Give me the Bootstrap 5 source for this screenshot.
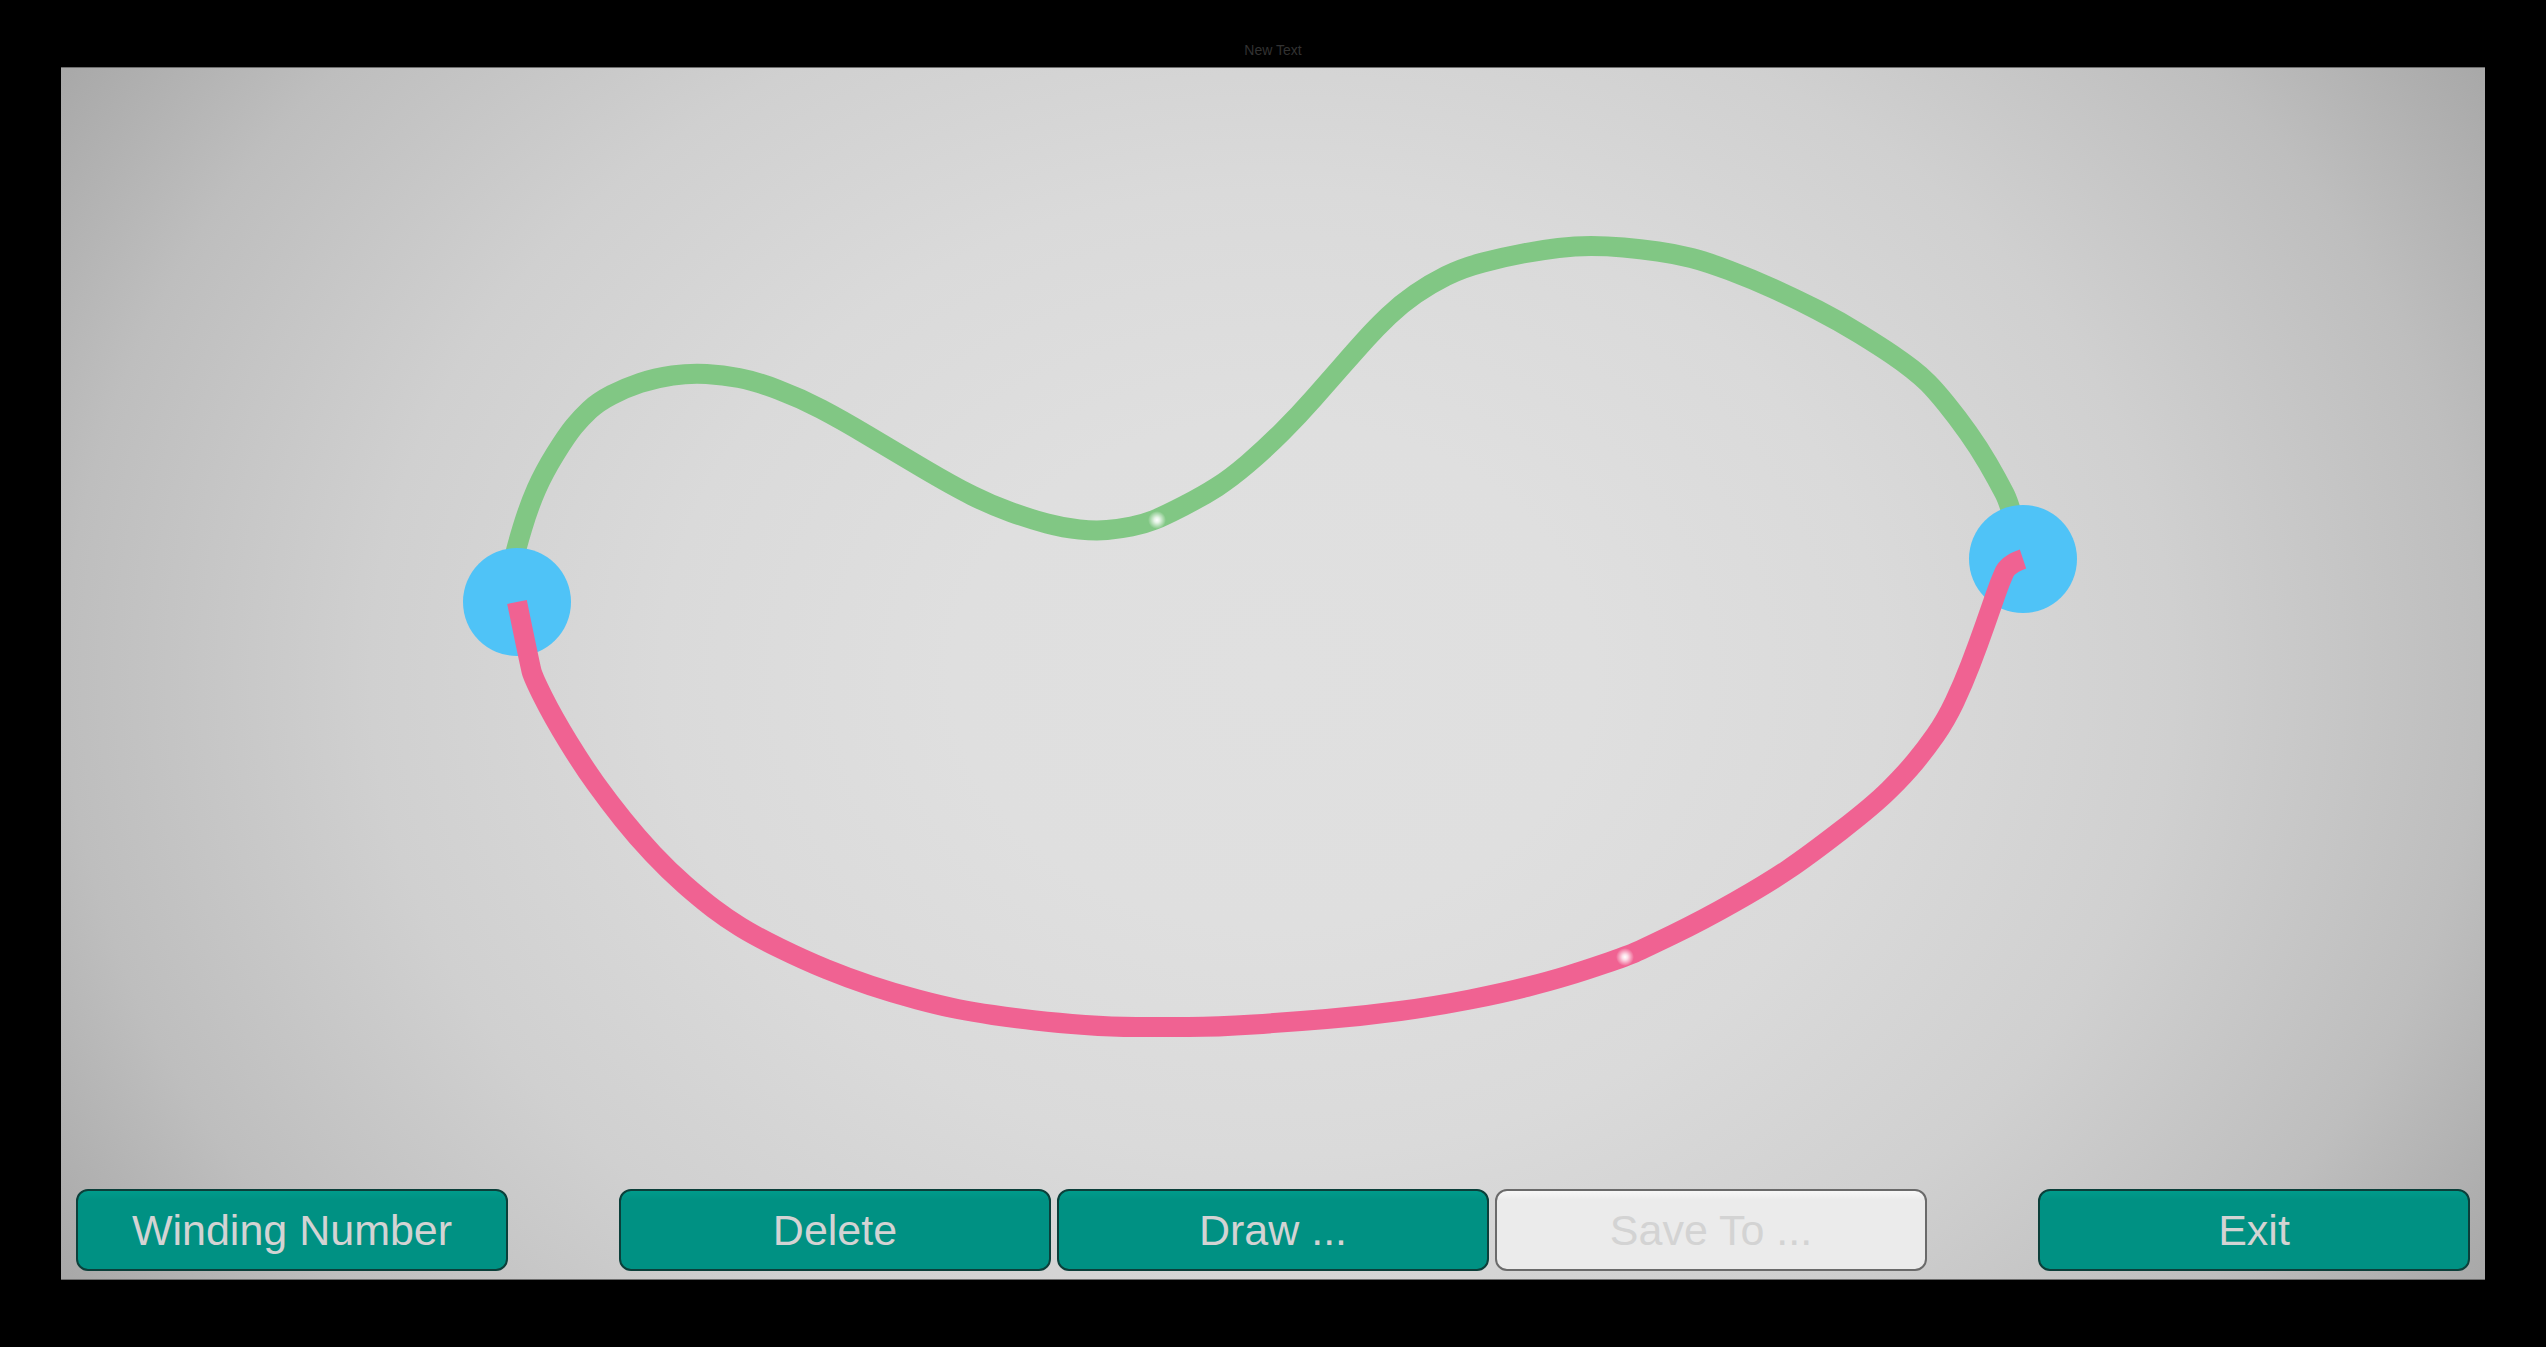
<!DOCTYPE html>
<html lang="en">
<head>
<meta charset="utf-8">
<meta name="viewport" content="width=device-width, initial-scale=1">
<title>Winding Number</title>
<link href="https://cdn.jsdelivr.net/npm/bootstrap@5.3.0/dist/css/bootstrap.min.css" rel="stylesheet">
<style>
  body { font-family: "Liberation Sans", Arial, sans-serif; background: #000; }
  .screen { padding: 0 61px 67px; }
  .caption { height: 67px; padding-top: 42px; font-size: 14px; line-height: 16px; color: #323232; }
  .stage {
    border-top: 1px solid #6e6e6e;
    border-bottom: 1px solid #6e6e6e;
    background: radial-gradient(ellipse 60% 95% at 50% 50%,
      #e0e0e0 0%, #dfdfdf 22%, #dadada 42%, #d0d0d0 62%, #bebebe 83%, #a6a6a6 100%);
  }
  .plane { min-height: 0; }
  .toolbar { padding: 8px 15px; }
  .toolbar-mid { flex: 0 1 1308px; gap: 6px; }
  .tool {
    flex: 0 1 432px;
    height: 82px;
    padding: 0 12px;
    border: 2px solid #0b3f3a;
    border-radius: 12px;
    background: linear-gradient(#009b8b, #009183 9px);
    color: #d3d3d3;
    font-size: 43px;
    line-height: 52px;
    white-space: nowrap;
  }
  .tool:hover { background: #009b8b; color: #e0e0e0; border-color: #0b3f3a; }
  .tool:disabled {
    border-color: #6a6a6a;
    background: linear-gradient(#f8f8f8, #ebebeb 9px);
    color: #d3d3d3;
    opacity: 1;
  }
</style>
</head>
<body>
<div class="screen d-flex flex-column vh-100">
  <div class="caption text-center flex-shrink-0">New Text</div>
  <main class="stage d-flex flex-column flex-fill overflow-hidden">
    <svg class="plane d-block w-100 flex-fill" viewBox="61 68 2424 1113" role="img" aria-label="Two paths between two points">
      <defs>
        <radialGradient id="glow">
          <stop offset="0" stop-color="#fff"/>
          <stop offset="0.3" stop-color="#fff" stop-opacity="0.8"/>
          <stop offset="1" stop-color="#fff" stop-opacity="0"/>
        </radialGradient>
      </defs>
      <path id="upper" fill="none" stroke="#81c784" stroke-width="20"/>
      <circle cx="517" cy="602" r="54" fill="#4fc3f7"/>
      <circle cx="2023" cy="559" r="54" fill="#4fc3f7"/>
      <path id="lower" fill="none" stroke="#f06292" stroke-width="20"/>
      <circle cx="1157" cy="520" r="9" fill="url(#glow)"/>
      <circle cx="1625" cy="957" r="9" fill="url(#glow)"/>
    </svg>
    <div class="toolbar d-flex justify-content-between flex-shrink-0">
      <button type="button" class="btn tool">Winding Number</button>
      <div class="toolbar-mid d-flex">
        <button type="button" class="btn tool">Delete</button>
        <button type="button" class="btn tool">Draw ...</button>
        <button type="button" class="btn tool" disabled>Save To ...</button>
      </div>
      <button type="button" class="btn tool">Exit</button>
    </div>
  </main>
</div>
<script src="https://cdn.jsdelivr.net/npm/bootstrap@5.3.0/dist/js/bootstrap.bundle.min.js"></script>
<script>
  // Control points of each path, in canvas units
  const upper = [[517,602],[511,573],[516,549],[529,506],[544,472],[567,435],[581,418],[598,402],[625,388],[655,378],[690,373],[723,375],[755,381],[800,398],[842,420],[892,450],[953,486],[991,505],[1030,519],[1064,528],[1095,531],[1119,529],[1144,524],[1164,516],[1203,496],[1231,478],[1265,449],[1299,415],[1328,382],[1357,349],[1376,328],[1401,304],[1430,284],[1462,268],[1504,257],[1542,250],[1575,246],[1607,246],[1640,249],[1676,254],[1707,262],[1752,279],[1796,299],[1839,321],[1881,347],[1903,362],[1921,376],[1935,390],[1957,417],[1979,448],[1997,479],[2012,508],[2023,559]];
  const lower = [[517,602],[530,665],[533,677],[553,717],[583,766],[609,802],[637,837],[669,871],[701,899],[726,918],[755,936],[804,960],[848,978],[893,993],[942,1006],[973,1012],[1013,1018],[1058,1023],[1112,1027],[1160,1027],[1217,1027],[1290,1022],[1363,1016],[1437,1006],[1503,993],[1550,981],[1583,971],[1627,956],[1643,949],[1703,920],[1768,883],[1808,856],[1874,805],[1905,774],[1925,750],[1946,720],[1963,684],[1978,645],[1992,605],[2000,582],[2008,564],[2023,559]];

  // Treat the points as control points and pass through the middle of each span
  function smooth(p) {
    let d = `M${p[0]}`;
    for (let i = 1; i < p.length - 1; i++) {
      const last = i === p.length - 2;
      const end = last ? p[i + 1] : [(p[i][0] + p[i + 1][0]) / 2, (p[i][1] + p[i + 1][1]) / 2];
      d += `Q${p[i]} ${end}`;
    }
    return d;
  }
  document.getElementById("upper").setAttribute("d", smooth(upper));
  document.getElementById("lower").setAttribute("d", smooth(lower));
</script>
</body>
</html>
